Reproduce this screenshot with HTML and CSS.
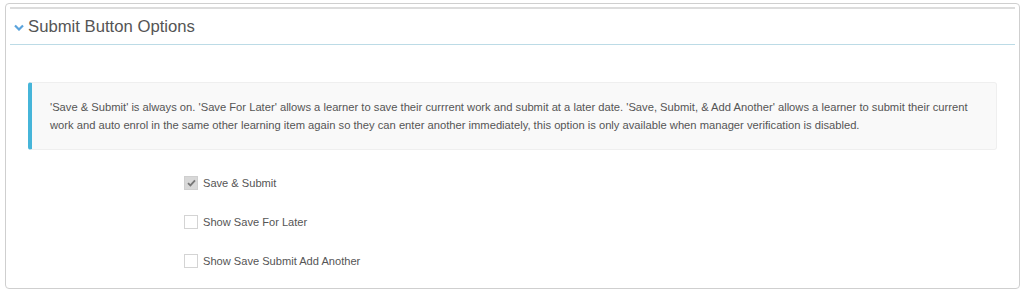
FILE: index.html
```html
<!DOCTYPE html>
<html lang="en">
<head>
    <meta charset="UTF-8">
    <meta name="viewport" content="width=device-width, initial-scale=1.0">
    <title>Submit Button Options</title>
    <link rel="stylesheet" href="styles.css">
</head>
<body>
    <div class="panel">
        <div class="panel-heading">
            <svg class="chevron" width="10" height="7" viewBox="0 0 10 7">
                <path d="M1 1.5 L5 5.5 L9 1.5" fill="none" stroke="#5aa3dc" stroke-width="2.2"/>
            </svg>
            <span class="title">Submit Button Options</span>
        </div>
        <div class="panel-body">
            <div class="note">
                'Save &amp; Submit' is always on. 'Save For Later' allows a learner to save their currrent work and submit at a later date. 'Save, Submit, &amp; Add Another' allows a learner to submit their current work and auto enrol in the same other learning item again so they can enter another immediately, this option is only available when manager verification is disabled.
            </div>
            <div class="options">
                <label class="option">
                    <span class="box checked">
                        <svg width="9" height="8" viewBox="0 0 9 8">
                            <path d="M1 4.2 L3.4 6.4 L8 1.4" fill="none" stroke="#777" stroke-width="1.8"/>
                        </svg>
                    </span>
                    Save &amp; Submit
                </label>
                <label class="option">
                    <span class="box"></span>
                    Show Save For Later
                </label>
                <label class="option">
                    <span class="box"></span>
                    Show Save Submit Add Another
                </label>
            </div>
        </div>
    </div>
</body>
</html>
```

FILE: styles.css
```css
body {
    margin: 0;
    background: #fff;
    font-family: "Liberation Sans", Arial, sans-serif;
    color: #555;
}

.panel {
    margin: 3px 4px 0 5px;
    height: 281px;
    border: 1px solid #cfcfcf;
    border-radius: 4px;
    padding: 3px 4px 0 4px;
}

.panel-heading {
    display: flex;
    align-items: center;
    height: 35px;
    border-top: 2px solid #dcdcdc;
    border-bottom: 1px solid #bcdbe6;
    padding-left: 4px;
}

.chevron {
    margin-right: 4px;
    margin-top: 1px;
}

.title {
    font-size: 16.7px;
    color: #555;
}

.panel-body {
    padding: 37px 18px 0 18px;
}

.note {
    background: #f9f9f9;
    border: 1px solid #efefef;
    border-left: 4px solid #46b5d9;
    border-radius: 3px;
    padding: 15px 12px 15px 18px;
    font-size: 11.2px;
    line-height: 18px;
    color: #555;
}

.options {
    margin-top: 13px;
    margin-left: 156px;
}

.option {
    display: flex;
    align-items: center;
    height: 39px;
    font-size: 11.1px;
    color: #555;
}

.box {
    display: flex;
    align-items: center;
    justify-content: center;
    width: 12px;
    height: 12px;
    border: 1px solid #d4d4d4;
    background: #fff;
    margin-right: 5px;
}

.box.checked {
    background: #d8d8d8;
    border-color: #cfcfcf;
}
```
